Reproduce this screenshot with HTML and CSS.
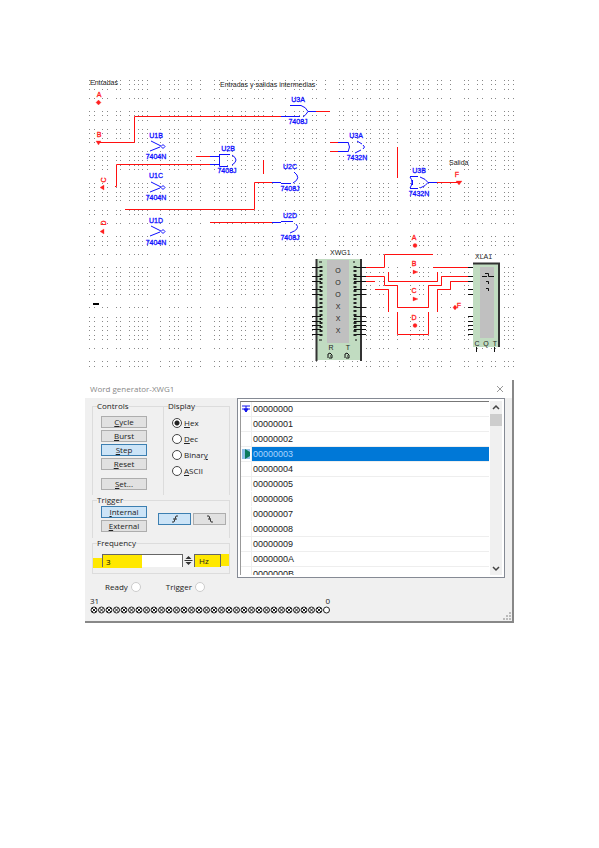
FILE: index.html
```html
<!DOCTYPE html>
<html lang="es">
  <head>
    <meta charset="UTF-8" />
    <meta name="viewport" content="width=device-width, initial-scale=1.0" />
    <title>Word generator-XWG1</title>
    <link rel="stylesheet" href="styles.css">
  </head>
  <body>
    <main class="page">
      <!-- Circuit -->
      <svg class="circuit" viewBox="85 78 429 292" role="img" aria-label="Circuito">
        <g id="grid" class="grid"></g>

        <g class="note">
          <text x="90" y="85">Entradas</text>
          <text x="220" y="87">Entradas y salidas intermedias</text>
          <text x="449" y="165">Salida</text>
          <text x="330" y="255">XWG1</text>
          <text x="475" y="259">XLA1</text>
        </g>
        <path class="dash" d="M93 304H99" />

        <!-- Wires -->
        <g class="wire">
          <path d="M98 142.500H134.500V116.500H281" />
          <path d="M316 111.500H330" />
          <path d="M196 156.500H210M115 186.500H116.500V164.500H210" />
          <path d="M263.500 160V174" />
          <path d="M125 209.500H254.500V182.500H272" />
          <path d="M210 222.500H272" />
          <path d="M330 142.500H338M330 151.500H338" />
          <path d="M397.500 147V178" />
          <path d="M437 182.500H458" />
          <path d="M366 267.500H384.500V254.500H433M433 267.500H468" />
          <path d="M388.500 272V281.500H437.500V272" />
          <path d="M366 276.500H384.500V285.500H397.500V307.500H428.500V285.500H441.500V276.500H469" />
          <path d="M366 281.500H375M375 289.500H388.500V312" />
          <path d="M397.500 312V334.500H428.500V312" />
          <path d="M437.500 312V289.500H450.500V281.500H469" />
        </g>

        <!-- Gates -->
        <g class="gate">
          <path d="M281 116.500H300M290 105.500H301Q306 107 308 111.500Q306 115 303 117M308 111.500H316" />
          <path d="M210 156.500H219M210 164.500H219M219.500 154V166.500H228M219 154.500H230M232 155Q240 160 232 165" />
          <path d="M272 182.500H281M281 183.500H291M294 172Q302 178 293 183" />
          <path d="M272 222.500H281M281 221.500H293M296 224Q301 229 290 233" />
          <path d="M338 142.500H348M338 151.500H348M348 142Q351 147 348 152M357 141L362 144M363 145Q366 147 363 149M361 150L355 153" />
          <path d="M410 176.500H418M420 177Q426 179 428 182.500Q426 186 420 188M410 188.500H418M410 177Q414 182 410 188M412.500 180V185M428 182.500H437" />
          <path d="M151 141L161 146M150 151L160 147M161 146.500L163 144.500L165 146.500L163 148.500Z" />
          <path d="M151 182L161 187M150 192L160 188M161 187.500L163 185.500L165 187.500L163 189.500Z" />
          <path d="M151 226L161 231M150 236L160 232M161 231.500L163 229.500L165 231.500L163 233.500Z" />
        </g>
        <g class="gate-label">
          <text x="298" y="102">U3A</text><text x="298" y="124">7408J</text>
          <text x="156" y="138">U1B</text><text x="156" y="159">7404N</text>
          <text x="228" y="151">U2B</text><text x="227" y="173">7408J</text>
          <text x="156" y="178">U1C</text><text x="156" y="200">7404N</text>
          <text x="290" y="169">U2C</text><text x="290" y="191">7408J</text>
          <text x="156" y="223">U1D</text><text x="156" y="245">7404N</text>
          <text x="290" y="218">U2D</text><text x="290" y="240">7408J</text>
          <text x="356" y="138">U3A</text><text x="357" y="160">7432N</text>
          <text x="419" y="173">U3B</text><text x="419" y="196">7432N</text>
        </g>

        <!-- Terminals -->
        <g class="terminal">
          <text x="99" y="97">A</text><path d="M98.500 100L101 102.500L98.500 105L96 102.500Z" />
          <text x="99" y="137">B</text><path d="M96 141H101L98.500 145Z" />
          <text transform="translate(106 180) rotate(-90)">C</text><path d="M104 185V190L100 187.500Z" />
          <text transform="translate(106 223) rotate(-90)">D</text><path d="M104 229V234L100 231.500Z" />
          <text x="457" y="177">F</text><path d="M456 181H462L459 185Z" />
          <text x="414" y="240">A</text><circle cx="415" cy="245.500" r="2" />
          <text x="414" y="266">B</text><path d="M413 270L418 272L413 274Z" />
          <text x="414" y="293">C</text><path d="M413 297L418 299L413 301Z" />
          <text x="414" y="320">D</text><circle cx="415" cy="325.500" r="2" />
          <text x="459" y="308">F</text><path d="M455 305L457 307.500L455 310L453 307.500Z" />
        </g>

        <!-- Word generator -->
        <g>
          <rect class="case" x="316" y="259" width="45" height="101" />
          <path class="edge" d="M316.500 259V361M361 259V361" />
          <rect class="face" x="327" y="260" width="22" height="83" />
          <path class="pins" d="M312 267.500h9m33 0h12M312 276.500h9m33 0h12M312 281.500h9m33 0h12M312 289.500h9m33 0h12M312 294.500h9m33 0h12M312 307.500h9m33 0h12M312 316.500h9m33 0h12M312 321.500h9m33 0h12M312 325.500h9m33 0h12M312 329.500h9m33 0h12M312 334.500h9m33 0h12" />
          <path class="beads" d="M321 266V336M355 266V336" />
          <g class="face-label">
            <text x="338" y="273">O</text>
            <text x="338" y="285">O</text>
            <text x="338" y="297">O</text>
            <text x="338" y="309">X</text>
            <text x="338" y="321">X</text>
            <text x="338" y="333">X</text>
            <text x="331" y="350">R</text>
            <text x="348" y="350">T</text>
          </g>
          <path class="pins" d="M328 358V354L330 353L332 355V358H329M330 356H331M345 358V354L347 353L349 355V358H346M347 356H348" />
          <path class="thin" d="M319 262h3M353 262h2M319 340h3M355 340h2" />
        </g>

        <!-- Logic analyzer -->
        <g>
          <rect class="case" x="473" y="263" width="26" height="84" />
          <path class="edge" d="M473 263.500H499V347" />
          <rect class="face" x="480" y="267" width="14" height="71" />
          <path class="pins" d="M468 267.500h5M468 276.500h5M468 281.500h5M468 289.500h5M468 294.500h5M468 307.500h5M468 316.500h5M468 321.500h5M468 325.500h5M468 329.500h5M468 334.500h5M476.500 347V352M494.500 347V352" />
          <path class="pins" d="M482 276.500H487M485 273.500H488.500V276.500H494M486 281.500H488.500V284M486 288.500H488.500V291" />
          <g class="face-label">
            <text x="477" y="346">C</text>
            <text x="486" y="346">Q</text>
            <text x="495" y="346">T</text>
          </g>
        </g>
      </svg>

      <!-- Word generator window -->
      <section class="window">
        <header class="titlebar">
          <h1>Word generator-XWG1</h1>
          <button class="close" aria-label="Close">
            <svg viewBox="0 0 8 8"><path d="M1 1L7 7M7 1L1 7" /></svg>
          </button>
        </header>

        <div class="content">
          <div class="settings">
            <div class="top">
              <fieldset class="controls">
                <legend>Controls</legend>
                <button><u>C</u>ycle</button>
                <button><u>B</u>urst</button>
                <button class="active"><u>S</u>tep</button>
                <button><u>R</u>eset</button>
                <button class="set"><u>S</u>et...</button>
              </fieldset>
              <fieldset class="display">
                <legend>Display</legend>
                <label><input type="radio" name="display" checked /><span><u>H</u>ex</span></label>
                <label><input type="radio" name="display" /><span><u>D</u>ec</span></label>
                <label><input type="radio" name="display" /><span>Binar<u>y</u></span></label>
                <label><input type="radio" name="display" /><span><u>A</u>SCII</span></label>
              </fieldset>
            </div>

            <fieldset class="trigger">
              <legend>Trigger</legend>
              <div>
                <button class="active"><u>I</u>nternal</button>
                <button><u>E</u>xternal</button>
              </div>
              <div class="slope">
                <button class="active" aria-label="Rising edge">
                  <svg viewBox="0 0 8 8"><path d="M1 7H3L5 1H7M2 4H6" /></svg>
                </button>
                <button aria-label="Falling edge">
                  <svg viewBox="0 0 8 8"><path d="M1 1H3L5 7H7M2 4H5" /></svg>
                </button>
              </div>
            </fieldset>

            <fieldset class="frequency">
              <legend>Frequency</legend>
              <div class="freq-row">
                <input type="text" value="3" aria-label="Frequency" />
                <svg class="spin" viewBox="0 0 10 13"><path d="M5 2L8 5H2ZM5 11L8 8H2ZM1 6H9V7H1Z" /></svg>
                <select aria-label="Unit"><option>Hz</option><option>kHz</option></select>
              </div>
            </fieldset>
          </div>

          <div class="words">
            <ul>
              <li><svg class="mark" viewBox="0 0 8 8"><path d="M0 1H8M0 4H8M4 1V7" /><path d="M2 4H6L4 7Z" /></svg><span>00000000</span></li>
              <li><span>00000001</span></li>
              <li><span>00000002</span></li>
              <li class="selected"><svg class="cursor" viewBox="0 0 8 10"><path d="M3 0L8 3V7L3 10Z" /></svg><span>00000003</span></li>
              <li><span>00000004</span></li>
              <li class="plain"><span>00000005</span></li>
              <li class="plain"><span>00000006</span></li>
              <li class="plain"><span>00000007</span></li>
              <li><span>00000008</span></li>
              <li><span>00000009</span></li>
              <li><span>0000000A</span></li>
              <li><span>0000000B</span></li>
            </ul>
            <div class="scrollbar">
              <svg viewBox="0 0 8 8"><path d="M2 5L4 3L6 5" /></svg>
              <div class="thumb"></div>
              <svg class="down" viewBox="0 0 8 8"><path d="M2 3L4 5L6 3" /></svg>
            </div>
          </div>
        </div>

        <div class="status">
          <span>Ready<i class="led"></i></span>
          <span>Trigger<i class="led"></i></span>
        </div>
        <div class="bits">
          <div class="range"><span>31</span><span>0</span></div>
          <svg id="bits" viewBox="0 0 240 8"></svg>
        </div>
        <svg class="grip" viewBox="0 0 8 8"><path d="M6 0h2v2h-2zM3 3h2v2h-2zM6 3h2v2h-2zM0 6h2v2h-2zM3 6h2v2h-2zM6 6h2v2h-2z" /></svg>
      </section>
    </main>

    <script>
      const svgNS = "http://www.w3.org/2000/svg";

      function add(parent, name, attrs) {
        const el = document.createElementNS(svgNS, name);
        for (const key in attrs) el.setAttribute(key, attrs[key]);
        parent.appendChild(el);
      }

      // Grid points of the schematic
      const cols = [
        89, 94, 102, 107, 116, 120, 129, 134, 138, 142, 147, 160, 169, 174, 178,
        187, 191, 200, 214, 219, 227, 232, 241, 245, 254, 258, 263, 272, 285,
        294, 299, 303, 312, 316, 325, 339, 343, 352, 357, 366, 370, 379, 383,
        388, 397, 410, 419, 423, 428, 437, 441, 450, 464, 468, 477, 482, 491,
        495, 504, 508, 513,
      ];
      const rows = [
        80, 84, 89, 98, 111, 115, 120, 129, 133, 138, 142, 151, 156, 160, 165,
        169, 183, 187, 192, 196, 200, 210, 214, 223, 236, 241, 245, 254, 267,
        272, 276, 281, 285, 289, 294, 307, 317, 321, 326, 330, 335, 339, 348,
        361, 366,
      ];
      const grid = document.getElementById("grid");
      rows.forEach((y) =>
        cols.forEach((x) => add(grid, "rect", { x, y, width: 1, height: 1 }))
      );

      // One circle for each of the 32 bits
      const bits = document.getElementById("bits");
      for (let i = 0; i < 32; i++) {
        const cx = 4 + i * 7.5;
        add(bits, "circle", { cx, cy: 4, r: 3 });
        if (i < 31) add(bits, "path", { d: `M${cx - 2} 2L${cx + 2} 6M${cx + 2} 2L${cx - 2} 6` });
      }
    </script>
  </body>
</html>
```
FILE: styles.css
```css
* {
  box-sizing: border-box;
}

body {
  margin: 0;
  background: #fff;
  color: #222;
  font-family: "Open Sans", sans-serif;
  font-size: 8px;
  line-height: 10px;
}

.page {
  padding: 78px 85px 40px;
}

/* Circuit */
.circuit {
  display: block;
  width: 100%;
}

.circuit text {
  font-family: "Liberation Sans", sans-serif;
  font-size: 7px;
}

.grid {
  fill: #888;
}

.note {
  fill: #222;
}

.dash {
  stroke: #000;
  stroke-width: 2;
}

.wire path {
  fill: none;
  stroke: #ff1010;
}

.gate path {
  fill: none;
  stroke: #1010ff;
}

.gate-label {
  fill: #1010ff;
  stroke: #1010ff;
  stroke-width: 0.3;
  text-anchor: middle;
}

.terminal {
  fill: #ff2020;
  stroke: #ff2020;
  stroke-width: 0.3;
  text-anchor: middle;
}

.case {
  fill: #c1dcc1;
}

.face {
  fill: #c0c0c0;
}

.edge {
  fill: none;
  stroke: #333;
  stroke-width: 2;
}

.pins,
.thin {
  fill: none;
  stroke: #111;
}

.beads {
  stroke: #222;
  stroke-width: 3;
  stroke-dasharray: 2 2;
}

.face-label {
  fill: #222;
  text-anchor: middle;
}

/* Window */
.window {
  position: relative;
  margin-top: 10px;
  border-right: 2px solid #888;
  border-bottom: 2px solid #888;
  background: #f0f0f0;
}

.titlebar {
  display: flex;
  align-items: center;
  justify-content: space-between;
  height: 18px;
  padding: 0 8px 0 5px;
  background: #fff;
}

.titlebar h1 {
  margin: 0;
  color: #888;
  font-size: 8px;
  font-weight: normal;
}

.close {
  width: 8px;
  height: 8px;
  padding: 0;
  border: 0;
  background: none;
}

.close svg {
  display: block;
  fill: none;
  stroke: #999;
}

.content {
  display: flex;
  gap: 7px;
  padding: 0 7px;
}

.settings {
  width: 138px;
  padding-top: 3px;
}

fieldset {
  min-width: 0;
  margin: 0;
  padding: 0;
  border: 1px solid #dcdcdc;
}

legend {
  height: 10px;
  margin-left: 4px;
  padding: 0;
}

.top {
  display: flex;
}

.top fieldset {
  height: 94px;
  border-bottom: 0;
}

.controls {
  display: flex;
  flex-direction: column;
  width: 72px;
  padding: 5px 0 0 8px;
}

.controls legend,
.trigger legend {
  margin-left: -4px;
}

.display {
  flex: 1;
  border-left: 0;
}

.settings button {
  display: flex;
  align-items: center;
  justify-content: center;
  width: 46px;
  height: 12px;
  margin: 0 0 2px;
  padding: 0;
  border: 1px solid #adadad;
  background: #e1e1e1;
  color: #222;
  font: inherit;
  white-space: pre;
}

.settings button.active {
  border-color: #3c7fb1;
  background: #cce4f7;
}

.settings button.set {
  margin-top: 6px;
}

.display label {
  display: flex;
  align-items: center;
  gap: 2px;
  height: 16px;
  margin-left: 8px;
}

.display legend + label {
  margin-top: 4px;
}

.display input {
  appearance: none;
  width: 10px;
  height: 10px;
  margin: 0;
  border: 1px solid #444;
  border-radius: 50%;
  background: #fff;
}

.display input:checked {
  background: radial-gradient(circle, #222 0 2px, #fff 3px);
}

.trigger {
  display: flex;
  gap: 11px;
  height: 43px;
  padding: 1px 0 0 8px;
  border-bottom: 0;
}

.slope {
  display: flex;
  gap: 2px;
  margin-top: 7px;
}

.settings .slope button {
  width: 33px;
}

.slope svg {
  width: 8px;
  height: 8px;
  fill: none;
  stroke: #333;
}

.frequency {
  height: 36px;
  padding: 6px 0 0;
}

.freq-row {
  display: flex;
  height: 14px;
  background: linear-gradient(#ffe800, #ffe800) 0 4px / 49px 10px no-repeat,
    linear-gradient(#ffe800, #ffe800) 99px 0 / 37px 12px no-repeat;
}

.freq-row input {
  width: 81px;
  height: 13px;
  margin-left: 9px;
  padding: 0 3px;
  border: 1px solid #666;
  border-bottom: 0;
  background: linear-gradient(90deg, #ffe800 39px, #fff 39px);
  font: inherit;
}

.spin {
  width: 11px;
  height: 13px;
  background: #f0f0f0;
  fill: #333;
}

.freq-row select {
  appearance: none;
  width: 27px;
  height: 13px;
  padding: 0 4px;
  border: 1px solid #666;
  border-bottom: 0;
  border-radius: 0;
  background: #ffe800;
  color: #222;
  font: inherit;
}

/* Word list */
.words {
  display: flex;
  flex: 1;
  height: 180px;
  padding: 2px;
  border: 1px solid #858a94;
  background: #fff;
}

.words ul {
  flex: 1;
  margin: 0 1px 0 0;
  padding: 0;
  overflow: hidden;
  border-top: 1px solid #777;
  border-left: 1px solid #999;
  list-style: none;
  font-family: "Liberation Sans", sans-serif;
  font-size: 9px;
}

.words li {
  display: flex;
  align-items: center;
  justify-content: flex-end;
  height: 15px;
  border-bottom: 1px solid #eee;
}

.words li.plain {
  border-bottom-color: #fff;
}

.words li span {
  width: calc(100% - 10px);
  padding-left: 1px;
  border-left: 1px solid #eee;
  line-height: 14px;
}

.words .selected span {
  background: #0078d7;
  color: #a8d4ff;
}

.words li svg {
  width: 8px;
  height: 10px;
  margin-right: 1px;
}

.mark {
  fill: #1414ee;
  stroke: #1414ee;
}

.cursor {
  background: #8ebfe8;
  fill: #0b7a5c;
}

.scrollbar {
  display: flex;
  flex-direction: column;
  width: 12px;
  background: #f0f0f0;
}

.scrollbar svg {
  height: 13px;
  fill: none;
  stroke: #444;
}

.thumb {
  height: 12px;
  background: #cdcdcd;
}

.scrollbar .down {
  margin-top: auto;
}

/* Status and bits */
.status {
  display: flex;
  gap: 25px;
  padding: 4px 0 0 20px;
}

.status span {
  display: flex;
  align-items: center;
  gap: 3px;
}

.led {
  width: 10px;
  height: 10px;
  border: 1px solid #ccc;
  border-radius: 50%;
  background: #fff;
}

.bits {
  width: 240px;
  margin-left: 5px;
  padding: 4px 0 7px;
}

.range {
  display: flex;
  justify-content: space-between;
}

.bits svg {
  display: block;
  width: 100%;
  fill: #fff;
  stroke: #222;
}

.grip {
  position: absolute;
  right: 1px;
  bottom: 1px;
  width: 8px;
  fill: #bbb;
}
```
